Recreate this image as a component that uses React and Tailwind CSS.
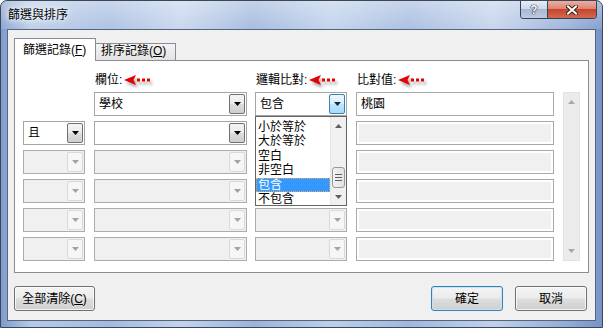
import React from "react";

const Tri = ({ color = "#000", up = false }) => (
  <svg width="7" height="4" viewBox="0 0 7 4">
    <path d={up ? "M0 4H7L3.5 0Z" : "M0 0H7L3.5 4Z"} fill={color} />
  </svg>
);

const RedArrow = () => (
  <svg
    width="30"
    height="14"
    viewBox="0 0 30 14"
    className="ml-[2px] drop-shadow-[2px_3px_1.5px_rgba(0,0,0,0.35)]"
  >
    <path d="M0 7L12 2L9.5 7L12 12Z" fill="#e80000" />
    <rect x="13" y="5.5" width="3" height="3" fill="#e80000" />
    <rect x="18" y="5.5" width="3" height="3" fill="#e80000" />
    <rect x="23" y="5.5" width="3" height="3" fill="#e80000" />
  </svg>
);

function Combo({ width, value, disabled, hot }) {
  const btn = hot
    ? "border-[#3c7fb1] bg-[linear-gradient(180deg,#eaf6fd_0%,#d9f0fc_50%,#bee6fd_50%,#a7d9f5_100%)]"
    : disabled
    ? "border-[#d9d9d9] bg-[#f6f6f6]"
    : "border-[#707070] bg-[linear-gradient(180deg,#f4f4f4_0%,#ebebeb_50%,#dddddd_50%,#cfcfcf_100%)]";
  return (
    <div
      className={`flex h-[24px] shrink-0 border p-[1px] ${width} ${
        disabled ? "border-[#acacac] bg-[#f0f0f0]" : "border-[#a5a5a5] bg-white"
      }`}
    >
      <div className="flex-1 truncate pl-[3px] text-[12px] leading-[20px]">{value}</div>
      <div className={`flex w-[16px] items-center justify-center rounded-[2px] border ${btn}`}>
        <Tri color={disabled ? "#a3a3a3" : hot ? "#0d2a4a" : "#000"} />
      </div>
    </div>
  );
}

function TextBox({ value, disabled }) {
  return (
    <div className="ml-[9px] h-[24px] w-[198px] shrink-0 border border-[#a9a9a9] bg-white p-[2px]">
      <div
        className={`h-full pl-[2px] text-[12px] leading-[18px] ${disabled ? "bg-[#f0f0f0]" : ""}`}
      >
        {value}
      </div>
    </div>
  );
}

function Button({ width, children, primary }) {
  return (
    <div
      className={`flex h-[25px] items-center justify-center rounded-[3px] border text-[12px] ${width} ${
        primary
          ? "border-[#3c7fb1] shadow-[inset_0_0_0_1px_#bfe6fb]"
          : "border-[#707070] shadow-[inset_0_0_0_1px_rgba(255,255,255,0.75)]"
      } bg-[linear-gradient(180deg,#f4f4f4_0%,#ebebeb_48%,#dddddd_52%,#cfcfcf_100%)]`}
    >
      {children}
    </div>
  );
}

const listItems = ["小於等於", "大於等於", "空白", "非空白", "包含", "不包含"];

function DropList() {
  return (
    <div className="absolute left-[232px] top-[24px] z-10 flex h-[90px] w-[92px] overflow-hidden border border-[#646464] bg-white">
      <div className="flex-1 pt-[3px]">
        {listItems.map((t) => (
          <div
            key={t}
            className={`h-[14.4px] pl-[2px] text-[12px] leading-[14.4px] ${
              t === "包含"
                ? "bg-[#3399ff] text-white outline-1 -outline-offset-1 outline-dotted outline-[#e8a65a]"
                : ""
            }`}
          >
            {t}
          </div>
        ))}
      </div>
      <div className="flex w-[16px] flex-col border-l border-[#e6e6e6] bg-[#f0f0f0]">
        <div className="flex h-[17px] items-center justify-center">
          <Tri up color="#606060" />
        </div>
        <div className="h-[33px]" />
        <div className="mx-[1px] flex h-[21px] flex-col items-center justify-center gap-[2px] rounded-[3px] border border-[#979797] bg-[linear-gradient(90deg,#f3f3f3,#e2e2e2)]">
          <div className="h-px w-[7px] bg-[#606060]" />
          <div className="h-px w-[7px] bg-[#606060]" />
          <div className="h-px w-[7px] bg-[#606060]" />
        </div>
        <div className="flex flex-1 items-center justify-center">
          <Tri color="#606060" />
        </div>
      </div>
    </div>
  );
}

const rows = [
  { first: null, field: "學校", op: "包含", value: "桃園" },
  { first: "且", field: "", op: "", value: "" },
  { first: "", field: "", op: "", value: "" },
  { first: "", field: "", op: "", value: "" },
  { first: "", field: "", op: "", value: "" },
  { first: "", field: "", op: "", value: "" },
];

export default function App() {
  return (
    <div className="relative h-[328px] w-[603px] overflow-hidden rounded-t-[7px] border border-[#3b4656] bg-[linear-gradient(90deg,#7f9bcd_0%,#b7cae6_5%,#a4bbe0_18%,#c2d3ec_30%,#9cb4dc_42%,#bccfea_55%,#a1b8de_68%,#c0d1eb_82%,#93acd7_94%,#7893c8_100%)] font-['Liberation_Sans','Noto_Sans_CJK_TC',sans-serif] text-black">
      {/* title bar */}
      <div className="flex h-[28px] items-start justify-between bg-[linear-gradient(180deg,rgba(255,255,255,0.4),rgba(255,255,255,0.12))] pl-[7px] pr-[5px]">
        <div className="self-center text-[12px] [text-shadow:0_0_5px_#fff,0_0_8px_#fff]">篩選與排序</div>
        <div className="flex h-[18px] overflow-hidden rounded-b-[4px] border border-t-0 border-[#34435a]">
          <div className="flex w-[27px] items-center justify-center border-r border-[#34435a] bg-[linear-gradient(180deg,#e6edf6_0%,#cdd8e8_45%,#a9b9d2_50%,#bccbe0_100%)] text-[12px] font-bold leading-none text-white [text-shadow:0_0_1px_#1c2433,0_0_1px_#1c2433,0_0_1px_#1c2433]">
            ?
          </div>
          <div className="flex w-[48px] items-center justify-center bg-[linear-gradient(180deg,#eab0a2_0%,#dc8672_45%,#c7452f_50%,#d5684f_100%)]">
            <svg width="12" height="10" viewBox="0 0 12 10">
              <path d="M2 1.5L10 8.5M10 1.5L2 8.5" stroke="#3a2320" strokeWidth="4" strokeLinecap="square" />
              <path d="M2 1.5L10 8.5M10 1.5L2 8.5" stroke="#fff" strokeWidth="2" strokeLinecap="square" />
            </svg>
          </div>
        </div>
      </div>

      {/* client */}
      <div className="mx-[6px] h-[292px] border border-[#56657b] bg-[#f0f0f0]">
        {/* tabs */}
        <div className="ml-[6px] mt-[8px] flex h-[22px] items-end">
          <div className="relative z-10 -mb-px h-[23px] w-[82px] border border-b-0 border-[#898c95] bg-white pl-[8px] pt-[3px] text-[12px] leading-[16px]">
            篩選記錄(<span className="underline">F</span>)
          </div>
          <div className="h-[17px] w-[80px] border border-b-0 border-l-0 border-[#898c95] bg-[linear-gradient(180deg,#f3f3f3,#e3e3e3)] pl-[5px] text-[12px] leading-[14px]">
            排序記錄(<span className="underline">O</span>)
          </div>
        </div>

        {/* panel */}
        <div className="ml-[6px] h-[213px] w-[575px] border border-[#898c95] bg-white pl-[8px] pt-[12px]">
          <div className="flex h-[14px] items-center text-[12px]">
            <div className="w-[62px]" />
            <div className="ml-[9px] flex w-[153px] items-center pl-[1px]">
              欄位:<RedArrow />
            </div>
            <div className="ml-[8px] flex w-[92px] items-center pl-[1px]">
              邏輯比對:<RedArrow />
            </div>
            <div className="ml-[9px] flex items-center pl-[1px]">
              比對值:<RedArrow />
            </div>
          </div>

          <div className="mt-[5px] flex">
            <div className="relative flex flex-col gap-[5px]">
              {rows.map((r, i) => {
                const dis = i > 1;
                return (
                  <div key={i} className="flex">
                    {r.first === null ? (
                      <div className="w-[62px] shrink-0" />
                    ) : (
                      <Combo width="w-[62px]" value={r.first} disabled={dis} />
                    )}
                    <div className="ml-[9px]">
                      <Combo width="w-[153px]" value={r.field} disabled={dis} />
                    </div>
                    <div className="ml-[8px]">
                      <Combo width="w-[92px]" value={r.op} disabled={i > 0} hot={i === 0} />
                    </div>
                    <TextBox value={r.value} disabled={i > 0} />
                  </div>
                );
              })}
              <DropList />
            </div>
            <div className="ml-[9px] flex h-[169px] w-[17px] flex-col items-center justify-between border border-[#e2e2e2] bg-[#ebebeb] py-[7px]">
              <Tri up color="#a8a8a8" />
              <Tri color="#a8a8a8" />
            </div>
          </div>
        </div>

        {/* buttons */}
        <div className="mt-[13px] flex items-center justify-between pl-[6px] pr-[8px]">
          <Button width="w-[81px]">
            全部清除(<span className="underline">C</span>)
          </Button>
          <div className="flex gap-[12px]">
            <Button width="w-[72px]" primary>
              確定
            </Button>
            <Button width="w-[72px]">取消</Button>
          </div>
        </div>
      </div>
    </div>
  );
}
